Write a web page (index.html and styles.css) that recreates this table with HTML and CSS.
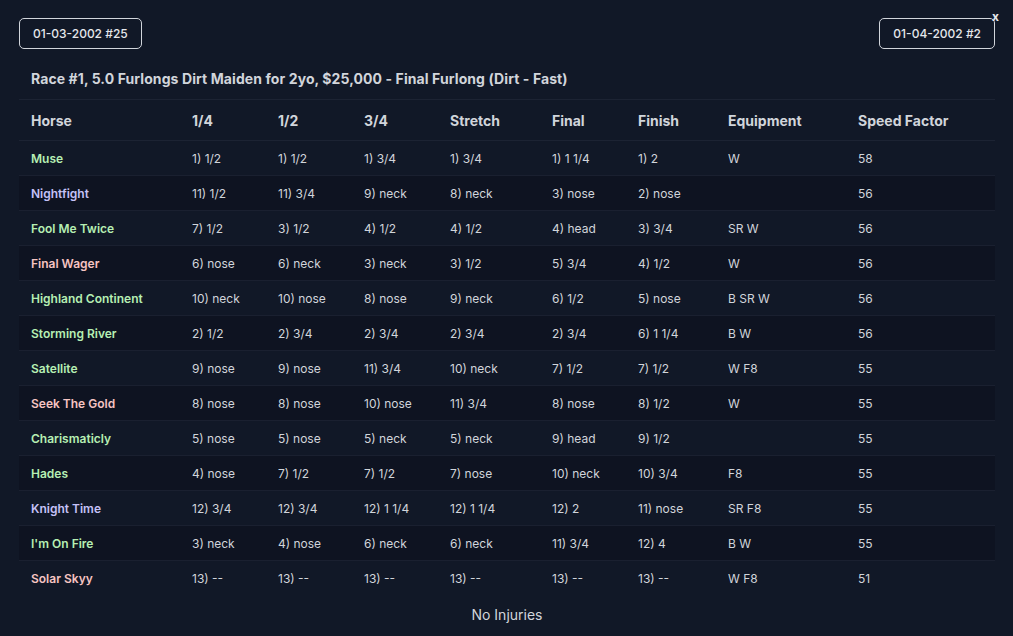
FILE: index.html
```html
<!DOCTYPE html>
<html>
<head>
<meta charset="utf-8">
<link rel="stylesheet" href="styles.css">
</head>
<body>
<div class="panel">
  <div class="nav">
    <button class="nav-btn">01-03-2002 #25</button>
    <button class="nav-btn">01-04-2002 #2</button>
    <span class="close">x</span>
  </div>
  <div class="title">Race #1, 5.0 Furlongs Dirt Maiden for 2yo, $25,000 - Final Furlong (Dirt - Fast)</div>
  <table class="results">
    <colgroup>
      <col class="c-horse"><col class="c-q"><col class="c-q"><col class="c-q"><col class="c-stretch"><col class="c-q"><col class="c-finish"><col class="c-equip"><col class="c-speed">
    </colgroup>
    <thead>
      <tr><th>Horse</th><th>1/4</th><th>1/2</th><th>3/4</th><th>Stretch</th><th>Final</th><th>Finish</th><th>Equipment</th><th>Speed Factor</th></tr>
    </thead>
    <tbody>
      <tr><td class="name g">Muse</td><td>1) 1/2</td><td>1) 1/2</td><td>1) 3/4</td><td>1) 3/4</td><td>1) 1 1/4</td><td>1) 2</td><td>W</td><td>58</td></tr>
      <tr><td class="name p">Nightfight</td><td>11) 1/2</td><td>11) 3/4</td><td>9) neck</td><td>8) neck</td><td>3) nose</td><td>2) nose</td><td></td><td>56</td></tr>
      <tr><td class="name g">Fool Me Twice</td><td>7) 1/2</td><td>3) 1/2</td><td>4) 1/2</td><td>4) 1/2</td><td>4) head</td><td>3) 3/4</td><td>SR W</td><td>56</td></tr>
      <tr><td class="name r">Final Wager</td><td>6) nose</td><td>6) neck</td><td>3) neck</td><td>3) 1/2</td><td>5) 3/4</td><td>4) 1/2</td><td>W</td><td>56</td></tr>
      <tr><td class="name g">Highland Continent</td><td>10) neck</td><td>10) nose</td><td>8) nose</td><td>9) neck</td><td>6) 1/2</td><td>5) nose</td><td>B SR W</td><td>56</td></tr>
      <tr><td class="name g">Storming River</td><td>2) 1/2</td><td>2) 3/4</td><td>2) 3/4</td><td>2) 3/4</td><td>2) 3/4</td><td>6) 1 1/4</td><td>B W</td><td>56</td></tr>
      <tr><td class="name g">Satellite</td><td>9) nose</td><td>9) nose</td><td>11) 3/4</td><td>10) neck</td><td>7) 1/2</td><td>7) 1/2</td><td>W F8</td><td>55</td></tr>
      <tr><td class="name r">Seek The Gold</td><td>8) nose</td><td>8) nose</td><td>10) nose</td><td>11) 3/4</td><td>8) nose</td><td>8) 1/2</td><td>W</td><td>55</td></tr>
      <tr><td class="name g">Charismaticly</td><td>5) nose</td><td>5) nose</td><td>5) neck</td><td>5) neck</td><td>9) head</td><td>9) 1/2</td><td></td><td>55</td></tr>
      <tr><td class="name g">Hades</td><td>4) nose</td><td>7) 1/2</td><td>7) 1/2</td><td>7) nose</td><td>10) neck</td><td>10) 3/4</td><td>F8</td><td>55</td></tr>
      <tr><td class="name p">Knight Time</td><td>12) 3/4</td><td>12) 3/4</td><td>12) 1 1/4</td><td>12) 1 1/4</td><td>12) 2</td><td>11) nose</td><td>SR F8</td><td>55</td></tr>
      <tr><td class="name g">I'm On Fire</td><td>3) neck</td><td>4) nose</td><td>6) neck</td><td>6) neck</td><td>11) 3/4</td><td>12) 4</td><td>B W</td><td>55</td></tr>
      <tr><td class="name r">Solar Skyy</td><td>13) --</td><td>13) --</td><td>13) --</td><td>13) --</td><td>13) --</td><td>13) --</td><td>W F8</td><td>51</td></tr>
    </tbody>
  </table>
  <div class="footer">No Injuries</div>
</div>
</body>
</html>
```

FILE: styles.css
```css
html, body {
  margin: 0;
  padding: 0;
  background: #111827;
}
body {
  font-family: Inter, "Noto Sans", "Liberation Sans", sans-serif;
  color: #d1d5db;
  width: 1013px;
  height: 636px;
  overflow: hidden;
}
.panel {
  padding: 18px 18px 0 19px;
  position: relative;
}
.nav {
  display: flex;
  justify-content: space-between;
  align-items: center;
  position: relative;
}
.nav-btn {
  background: transparent;
  border: 1px solid #d1d5db;
  border-radius: 5px;
  color: #e5e7eb;
  font-family: inherit;
  font-size: 12px;
  font-weight: 500;
  height: 31px;
  padding: 0 13px;
  line-height: 29px;
}
.close {
  position: absolute;
  right: -4px;
  top: -8px;
  font-size: 12px;
  font-weight: 700;
  color: #e5e7eb;
  line-height: 14px;
}
.title {
  font-size: 14px;
  letter-spacing: 0.09px;
  font-weight: 700;
  color: #d1d5db;
  padding: 20px 12px 10px;
  line-height: 20px;
  border-bottom: 1px solid #1c2333;
}
.results {
  width: 976px;
  border-collapse: collapse;
  table-layout: fixed;
}
.c-horse { width: 161px; }
.c-q { width: 86px; }
.c-stretch { width: 102px; }
.c-finish { width: 90px; }
.c-equip { width: 130px; }
.c-speed { width: 149px; }
.results th {
  text-align: left;
  font-size: 14px;
  font-weight: 700;
  color: #d1d5db;
  height: 40px;
  padding: 0 12px;
  border-bottom: 1px solid #1c2333;
}
.results td {
  font-size: 12px;
  color: #d1d5db;
  height: 34px;
  padding: 0 12px;
  border-bottom: 1px solid #1a2030;
  white-space: nowrap;
}
.results tbody tr:nth-child(even) td {
  background: #0e1321;
}
.results tbody tr:last-child td {
  border-bottom: none;
}
.results td.name {
  font-weight: 600;
}
.g { color: #b6efb3 !important; }
.p { color: #c5c2f7 !important; }
.r { color: #f6c4c2 !important; }
.footer {
  text-align: center;
  font-size: 14px;
  color: #d1d5db;
  padding-top: 11px;
}
```
